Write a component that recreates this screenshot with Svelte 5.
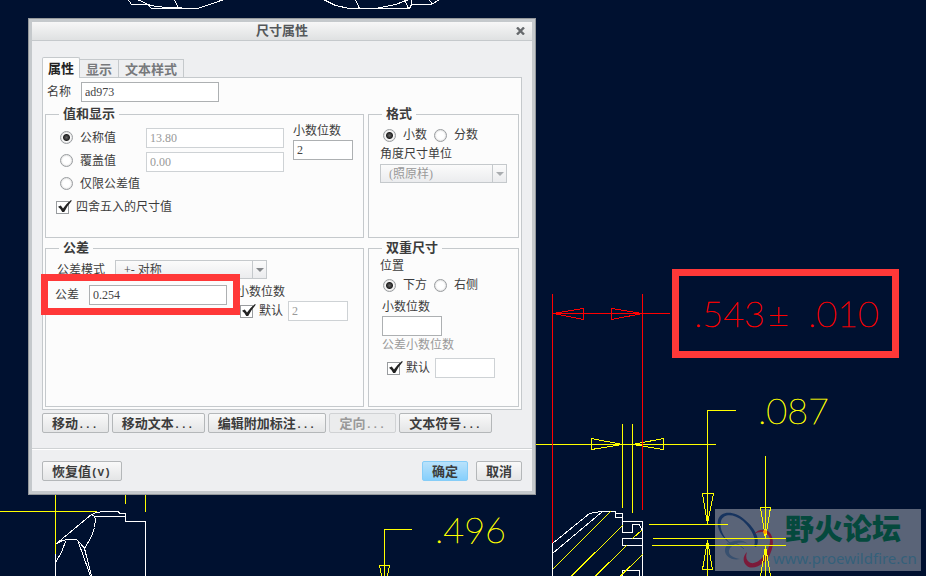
<script lang="ts">
  const tabs = ['属性', '显示', '文本样式'];
  const valueModes = ['公称值', '覆盖值', '仅限公差值'];
  const actions = [
    { label: '移动', disabled: false },
    { label: '移动文本', disabled: false },
    { label: '编辑附加标注', disabled: false },
    { label: '定向', disabled: true },
    { label: '文本符号', disabled: false },
  ];

  let activeTab = $state('属性');
  let valueMode = $state('公称值');
  let format = $state('小数');
  let position = $state('下方');
  let name = $state('ad973');
  let decimals = $state('2');
  let tolerance = $state('0.254');
  let dualDecimals = $state('');
</script>

{#snippet radio(group: string, label: string, current: string, pick: (v: string) => void)}
  <label class="option">
    <input type="radio" name={group} checked={current === label} onchange={() => pick(label)} />
    {label}
  </label>
{/snippet}

{#snippet check(label: string)}
  <label class="option">
    <span class="check">
      <input type="checkbox" checked />
      <svg class="tick" width="18" height="16" viewBox="0 0 18 16" aria-hidden="true">
        <path d="M2 6.8 4.8 5.5 7 8.6 Q10.5 3.4 15 0 L15.8 0.8 Q11.5 5.5 8.2 12 L6.2 12 Q4.6 8.6 2 6.8Z" />
      </svg>
    </span>
    {label}
  </label>
{/snippet}

<main class="workspace">
  <svg class="drawing" width="100%" height="100%" aria-label="drawing">
    <!-- forum stamp -->
    <g class="stamp">
      <rect x="715" y="509" width="206" height="62" fill="#5a6478" />
      <path fill="#17345f" d="M731 544C722 538 716 528 718 520C721 510 735 511 745 520C756 529 761 541 756 547L754 546C757 540 752 529 743 521C734 514 724 513 721 521C719 529 724 538 731 544Z" />
      <path fill="#7b1a39" d="M754 534C758 529 766 528 770 533C775 540 773 550 768 558C762 566 752 570 747 566C743 563 742 557 747 552C745 558 747 562 751 563C756 564 763 559 767 551C771 543 771 537 767 534C763 531 758 532 754 534Z" />
      <path fill="#38506f" d="M748 544C742 541 734 543 730 548C727 553 730 557 740 559C732 561 724 556 725 549C727 541 741 537 748 544Z" />
      <path fill="none" stroke="#38506f" d="M727 544C731 540 739 544 744 549" />
      <text class="stamp-name" x="785" y="540">野火论坛</text>
      <text class="stamp-url" x="773" y="564">www.proewildfire.cn</text>
    </g>

    <!-- part outlines -->
    <g class="line part">
      <path d="M128.5 0 131.5 4.5H147.5L151.5 8.5H197.5L222.5 0M138.5 0 150.5 5.5 165.5 7.5 197.5 8.5M174.5 0 178.5 8.5" />
      <path d="M324.5 0 335.5 5.5 349.5 8.5H409.5L411.5 4.5H431.5L438.5 0M355.5 0 359.5 8.5M375.5 8.5 395.5 4.5 407.5 0M404.5 0 408.5 8.5M411.5 0V4.5M429.5 0 432.5 4.5" />
      <path d="M55.5 576V553.5M56.5 543.5 91.5 514.5 96.5 512.5 103.5 511.5H118.5L119.5 513.5H125.5V521.5H145.5V576" />
      <path d="M91.5 514.5 94.5 516.5H125.5M94.5 516.5 95.5 519.5 94.5 527.5 91.5 536.5 84.5 548.5" />
      <path d="M56.5 543.5 62.5 540.5 67.5 539.5H76.5L80.5 543.5 84.5 548.5 91.5 576M78.5 542.5 90.5 576M65.5 541.5 61.5 552.5 55.5 562.5" />
      <path d="M552.5 576V543.5L589.5 513.5 601.5 511.5H615.5V517.5H622.5V532.5H632.5V524.5H639.5L642.5 531.5M552.5 553.5 602.5 511.5M615.5 513.5H622.5V521.5H642.5V576" />
      <path d="M642.5 538.5H622.5V545.5H642.5M622.5 576V570.5H639.5V576" />
    </g>

    <!-- hatching, leaders and dimension lines -->
    <g class="line dim">
      <path d="M552.5 569.5 610.5 511.5M571.5 576 622.5 525.5M595.5 576 626.5 545.5M632.5 538.5 642.5 529.5M620.5 576 642.5 554.5" />
      <path d="M55.5 490V553.5M125.5 490V503.5M145.5 490V511.5M0 511.5H96.5" />
      <path d="M530 444.5H716M622.5 424V508M632.5 424V513M622.5 444.5 591.5 438.5V449.5ZM632.5 444.5 663.5 438.5V449.5Z" />
      <path d="M736 410.5H707.5V524.5M707.5 523.5 702.5 493.5H713.5ZM649 524.5H728M653 538.5H786M652 545.5H786" />
      <path d="M707.5 576V540.5L702.5 569.5H712.5L707.5 540.5" />
      <path d="M765.5 456V538.5L760.5 507.5H770.5L765.5 538.5M765.5 576V545.5M760.5 576 765.5 546.5 770.5 576" />
      <path d="M412 529.5H384.5V576M381.5 576 379.5 565.5H389.5L387.5 576" />
    </g>
    <g class="line selected">
      <path d="M552.5 294V543M642.5 294V510M552.5 313.5H670M553.5 313.5 583.5 308.5V319.5ZM642.5 313.5 611.5 308.5V319.5Z" />
    </g>
    <circle cx="765" cy="532" r="2" fill="#ff9a00" />

    <g class="value">
      <text class="dim-text" x="829" y="424">.087</text>
      <text class="dim-text" x="506" y="543">.496</text>
      <text class="selected-text" x="765" y="327">.543</text>
      <text class="selected-text" x="789" y="327">±</text>
      <text class="selected-text" x="879" y="327">.010</text>
    </g>
    <rect x="675.5" y="272.5" width="220" height="82" fill="none" stroke="#ff3838" stroke-width="7" />
  </svg>

  <form class="dialog" aria-labelledby="dialog-title" onsubmit={(e) => e.preventDefault()}>
    <header class="titlebar">
      <h1 id="dialog-title">尺寸属性</h1>
      <button class="close" type="button" aria-label="关闭">
        <svg width="9" height="8" viewBox="0 0 9 8"><path d="M1 0.5 8 7.5M8 0.5 1 7.5" /></svg>
      </button>
    </header>

    <div class="body">
      <div class="tabs" role="tablist">
        {#each tabs as tab (tab)}
          <button
            type="button"
            role="tab"
            class="tab"
            class:active={tab === activeTab}
            aria-selected={tab === activeTab}
            onclick={() => (activeTab = tab)}>{tab}</button>
        {/each}
      </div>

      <div class="panel" role="tabpanel">
        <div class="name-row">
          <label for="name">名称</label>
          <input id="name" class="field wide" type="text" bind:value={name} />
        </div>

        <div class="groups">
          <fieldset>
            <legend>值和显示</legend>
            <div class="values">
              <div class="modes">
                {#each valueModes as mode (mode)}
                  {@render radio('value-mode', mode, valueMode, (v) => (valueMode = v))}
                {/each}
              </div>
              <div class="amounts">
                <input class="field wide" type="text" value="13.80" aria-label="公称值" disabled />
                <input class="field wide" type="text" value="0.00" aria-label="覆盖值" disabled />
              </div>
              <div class="stack">
                <label for="decimals">小数位数</label>
                <input id="decimals" class="field narrow" type="text" bind:value={decimals} />
              </div>
            </div>
            <div class="rounding">{@render check('四舍五入的尺寸值')}</div>
          </fieldset>

          <fieldset>
            <legend>格式</legend>
            <div class="side">
              <div class="pair">
                {@render radio('format', '小数', format, (v) => (format = v))}
                {@render radio('format', '分数', format, (v) => (format = v))}
              </div>
              <label class="caption" for="angle">角度尺寸单位</label>
              <div class="select angle">
                <select id="angle" disabled><option>(照原样)</option></select>
              </div>
            </div>
          </fieldset>

          <fieldset>
            <legend>公差</legend>
            <div class="tolerance">
              <div class="mode-row">
                <label for="mode">公差模式</label>
                <div class="select mode">
                  <select id="mode"><option>+- 对称</option></select>
                </div>
              </div>
              <div class="tolerance-row">
                <div class="amount">
                  <label for="tolerance">公差</label>
                  <input id="tolerance" class="field wide" type="text" bind:value={tolerance} />
                  <span class="marker"></span>
                </div>
                <div class="places">
                  <label for="places">小数位数</label>
                  <div class="default">
                    {@render check('默认')}
                    <input id="places" class="field narrow" type="text" value="2" disabled />
                  </div>
                </div>
              </div>
            </div>
          </fieldset>

          <fieldset>
            <legend>双重尺寸</legend>
            <div class="side dual">
              <span class="caption">位置</span>
              <div class="pair">
                {@render radio('position', '下方', position, (v) => (position = v))}
                {@render radio('position', '右侧', position, (v) => (position = v))}
              </div>
              <div class="dual-places">
                <label class="caption" for="dual">小数位数</label>
                <input id="dual" class="field narrow" type="text" bind:value={dualDecimals} />
                <label class="caption muted" for="dual-tolerance">公差小数位数</label>
                <div class="default">
                  {@render check('默认')}
                  <input id="dual-tolerance" class="field narrow" type="text" disabled />
                </div>
              </div>
            </div>
          </fieldset>
        </div>
      </div>

      <div class="actions">
        {#each actions as action (action.label)}
          <button class="btn" type="button" disabled={action.disabled}>{action.label}<span class="latin">...</span></button>
        {/each}
      </div>
    </div>

    <footer>
      <button class="btn" type="reset">恢复值<span class="latin">(V)</span></button>
      <div class="confirm">
        <button class="btn primary" type="submit">确定</button>
        <button class="btn" type="button">取消</button>
      </div>
    </footer>
  </form>
</main>

<style>
  :global(body) {
    background: #001130;
  }

  .workspace {
    position: relative;
    min-height: 100vh;
    overflow: hidden;
    font: 12px/18px "Liberation Serif", "Noto Sans CJK SC", sans-serif;
    color: #3c3c3c;
  }

  .workspace * {
    box-sizing: border-box;
  }

  /* drawing */
  .drawing {
    position: absolute;
    inset: 0;
  }

  .line {
    fill: none;
    shape-rendering: crispEdges;
  }
  .part { stroke: #fff; }
  .dim { stroke: #ff0; }
  .selected { stroke: #f00; }

  .value text {
    font-family: Lato, sans-serif;
    font-weight: 100;
    font-size: 36px;
    text-anchor: end;
    stroke-width: 0.5px;
  }
  .value .dim-text {
    fill: #ff0;
    stroke: #ff0;
  }
  .value .selected-text {
    fill: #f00;
    stroke: #f00;
  }

  .stamp-name {
    font: 900 29px "Noto Sans CJK SC", sans-serif;
    fill: #05493d;
  }
  .stamp-url {
    font: 15px "Noto Sans", sans-serif;
    fill: #34607a;
  }

  /* dialog */
  .dialog {
    position: absolute;
    left: 28px;
    top: 18px;
    border: 1px solid #94989b;
    box-shadow: inset 0 0 0 3px #c5c9cc;
    padding: 3px;
    background: #eeeff1;
  }

  .titlebar {
    position: relative;
    height: 19px;
    border-bottom: 1px solid #c5c9cc;
    background: linear-gradient(#f7f7f7, #dfe1e2);
  }

  h1 {
    margin: 0;
    font-size: 13px;
    line-height: 18px;
    text-align: center;
    color: #55585b;
  }

  .close {
    position: absolute;
    right: 7px;
    top: 5px;
    display: flex;
    padding: 0;
    border: 0;
    background: none;
  }
  .close path {
    stroke: #66696c;
    stroke-width: 2.4;
  }

  .body {
    padding: 16px 10px 15px;
    border-bottom: 1px solid #cfd2d4;
  }

  .tabs {
    display: flex;
    align-items: flex-end;
    height: 20px;
  }

  .tab {
    height: 18px;
    padding: 0 6px;
    border: solid #c5c9cc;
    border-width: 1px 1px 0 0;
    background: #eeeff1;
    font: bold 13px/18px "Noto Sans CJK SC", sans-serif;
    color: #77797c;
  }
  .tab.active {
    position: relative;
    height: 21px;
    margin-bottom: -1px;
    padding: 0 5px;
    border-left-width: 1px;
    border-radius: 2px 2px 0 0;
    background: #fcfcfc;
    color: #222;
  }

  .panel {
    padding: 4px 2px 2px;
    border: 1px solid #c5c9cc;
    background: #fcfcfc;
  }

  .name-row {
    display: flex;
    align-items: center;
    gap: 10px;
    padding-left: 2px;
    margin-bottom: 3px;
  }

  .groups {
    display: grid;
    grid-template-columns: 319px 151px;
    grid-template-rows: 133px 168px;
    gap: 1px 4px;
  }

  fieldset {
    min-width: 0;
    margin: 0;
    padding: 0;
    border: 1px solid #c5c9cc;
  }

  legend {
    height: 18px;
    margin-left: 13px;
    padding: 0 4px;
    font-size: 13px;
    font-weight: bold;
  }

  .field {
    height: 20px;
    padding: 0 3px;
    border: 1px solid #adb0b2;
    background: #fff;
    font: inherit;
    color: #444;
  }
  .field:disabled {
    border-color: #ced2d5;
    color: #999;
  }
  .wide { width: 138px; }
  .narrow { width: 60px; }

  .option {
    display: flex;
    align-items: center;
    gap: 7px;
  }

  input[type="radio"],
  input[type="checkbox"] {
    appearance: none;
    display: block;
    width: 13px;
    height: 13px;
    margin: 0;
    border: 1px solid #999c9f;
    background: #fff;
  }
  input[type="radio"] {
    border-radius: 50%;
    box-shadow: inset 0 0 2px #bbb;
  }
  input[type="radio"]:checked {
    background: radial-gradient(circle, #666 0, #222 3px, #fff 4px);
  }

  .check {
    position: relative;
  }
  .tick {
    position: absolute;
    left: 0;
    top: -1px;
    fill: #222;
    pointer-events: none;
    visibility: hidden;
  }
  input:checked + .tick {
    visibility: visible;
  }

  .values {
    display: flex;
    height: 72px;
  }
  .modes {
    width: 100px;
    padding: 3px 0 0 14px;
  }
  .modes .option {
    height: 23px;
  }
  .amounts {
    display: flex;
    flex-direction: column;
    gap: 4px;
    padding-top: 5px;
    margin-right: 9px;
  }
  .stack {
    display: flex;
    flex-direction: column;
    line-height: 17px;
  }
  .rounding {
    padding: 3px 0 0 10px;
  }

  .side {
    display: flex;
    flex-direction: column;
    padding: 2px 11px 0;
  }
  .side.dual {
    padding-top: 0;
  }
  .pair {
    display: flex;
    gap: 7px;
    height: 20px;
    padding-left: 3px;
  }
  .dual-places {
    display: flex;
    flex-direction: column;
    align-items: flex-start;
    padding: 3px 0 0 2px;
  }
  .muted {
    color: #999;
  }
  .default {
    display: flex;
    align-items: center;
    gap: 5px;
  }
  .default .option {
    gap: 6px;
  }
  .dual-places .default {
    padding: 4px 0 0 5px;
  }

  .select {
    position: relative;
  }
  .select::before,
  .select::after {
    content: "";
    position: absolute;
    pointer-events: none;
  }
  .select::before {
    top: 0;
    bottom: 0;
    right: 14px;
    border-left: 1px solid #c5c9cc;
  }
  .select::after {
    right: 3px;
    top: 8px;
    border: 4px solid transparent;
    border-top-color: #85888b;
    border-bottom: 0;
  }
  select {
    appearance: none;
    display: block;
    width: 100%;
    height: 19px;
    padding: 0 20px 0 8px;
    border: 1px solid #c5c9cc;
    border-radius: 0;
    background: linear-gradient(#fbfbfb, #ebecee);
    font: inherit;
    color: #444;
  }
  select:disabled {
    color: #999;
    opacity: 1;
  }
  .angle {
    width: 127px;
    margin-top: 1px;
  }
  .angle::after {
    border-top-color: #aaadb0;
  }
  .mode {
    width: 152px;
  }

  .tolerance {
    padding: 3px 0 0 9px;
  }
  .mode-row {
    display: flex;
    align-items: center;
    gap: 10px;
    padding-left: 2px;
  }
  .tolerance-row {
    display: flex;
    align-items: flex-start;
    margin-top: 3px;
  }
  .amount {
    position: relative;
    display: flex;
    align-items: center;
    gap: 10px;
    margin-top: 3px;
  }
  .marker {
    position: absolute;
    inset: -11px -13px -10px -14px;
    border: 7px solid #ff3838;
    pointer-events: none;
  }
  .places {
    margin: 1px 0 0 10px;
  }
  .places .default {
    padding-left: 3px;
  }

  .actions {
    display: flex;
    gap: 3px;
    margin-top: 3px;
  }

  .btn {
    height: 20px;
    padding: 0 9px;
    border: 1px solid #b4b7b9;
    border-radius: 2px;
    background: linear-gradient(#f9f9f9, #e4e5e6);
    font: bold 13px/18px "Noto Sans CJK SC", sans-serif;
    color: #3c3c3c;
    white-space: nowrap;
  }
  .btn:has(.latin) {
    padding-right: 10px;
  }
  .btn:disabled {
    border-color: #d0d2d4;
    background: #ebeced;
    color: #999;
  }
  .btn.primary {
    border-color: #86cdf7;
    background: linear-gradient(#b9e2fb, #86cffc);
  }
  .latin {
    font-family: "Liberation Mono", monospace;
    font-size: 11px;
  }

  footer {
    display: flex;
    justify-content: space-between;
    padding: 11px 10px 10px;
    border-top: 1px solid #fff;
  }
  .confirm {
    display: flex;
    gap: 8px;
  }
</style>
